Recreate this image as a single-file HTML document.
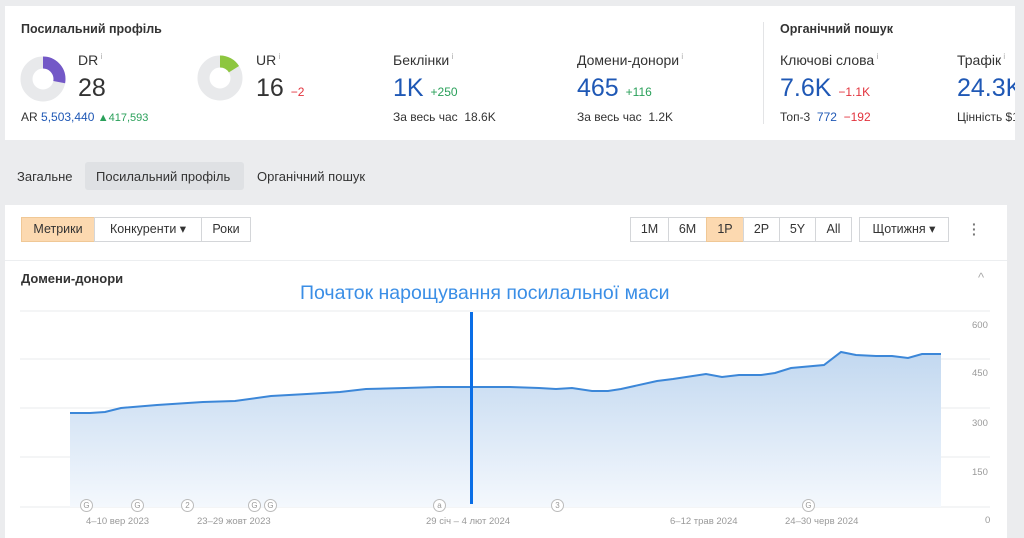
<!DOCTYPE html>
<html><head><meta charset="utf-8"><style>
*{margin:0;padding:0;box-sizing:border-box}
body{width:1024px;height:538px;overflow:hidden;background:#ebecee;font-family:"Liberation Sans",sans-serif;color:#333;position:relative}
.a{position:absolute;white-space:nowrap}
.top{position:absolute;left:5px;top:6px;width:1019px;height:134px;background:#fff}
.h{font-size:12.5px;font-weight:bold;color:#333}
.lbl{font-size:14px;color:#333}
.lbl sup{font-size:8px;color:#aaa;vertical-align:6px}
.big{font-size:25px}
.blue{color:#1f58b5}
.sm{font-size:12px;color:#333}
.g{color:#2aa05a}.r{color:#e2333d}
.btn{position:absolute;top:217px;height:25px;border:1px solid #d4d6d9;background:#fff;font-size:12.5px;line-height:23px;text-align:center;color:#333}
.pe{background:#fcd9b0;border-color:#f0c896}
.mk{position:absolute;top:499px;width:13px;height:13px;border:1px solid #bbb;border-radius:50%;background:#fff;font-size:8px;line-height:11px;text-align:center;color:#999}
.dt{position:absolute;top:516px;font-size:9.5px;color:#999;white-space:nowrap}
.yl{position:absolute;left:972px;font-size:9.5px;color:#999}
</style></head><body>
<div class="top"></div>
<div class="a h" style="left:21px;top:22px">Посилальний профіль</div>
<svg class="a" style="left:20px;top:55px" width="48" height="48" viewBox="0 0 48 48">
<circle cx="23" cy="24" r="16.5" fill="none" stroke="#e8e9eb" stroke-width="12"/>
<circle cx="23" cy="24" r="16.5" fill="none" stroke="#7358c7" stroke-width="12" stroke-dasharray="29 200" transform="rotate(-90 23 24)"/></svg>
<div class="a lbl" style="left:78px;top:52px">DR<sup> i</sup></div>
<div class="a big" style="left:78px;top:74px">28</div>
<div class="a sm" style="left:21px;top:110px">AR <span class="blue">5,503,440</span> <span class="g" style="font-size:11px">▲417,593</span></div>
<svg class="a" style="left:197px;top:55px" width="48" height="48" viewBox="0 0 48 48">
<circle cx="23" cy="23" r="16.5" fill="none" stroke="#e8e9eb" stroke-width="12"/>
<circle cx="23" cy="23" r="16.5" fill="none" stroke="#8dc63f" stroke-width="12" stroke-dasharray="16.6 200" transform="rotate(-90 23 23)"/></svg>
<div class="a lbl" style="left:256px;top:52px">UR<sup> i</sup></div>
<div class="a big" style="left:256px;top:74px">16 <span class="r" style="font-size:12px">−2</span></div>
<div class="a lbl" style="left:393px;top:52px">Беклінки<sup> i</sup></div>
<div class="a big blue" style="left:393px;top:74px">1K <span class="g" style="font-size:12px">+250</span></div>
<div class="a sm" style="left:393px;top:110px">За весь час&nbsp; 18.6K</div>
<div class="a lbl" style="left:577px;top:52px">Домени-донори<sup> i</sup></div>
<div class="a big blue" style="left:577px;top:74px">465 <span class="g" style="font-size:12px">+116</span></div>
<div class="a sm" style="left:577px;top:110px">За весь час&nbsp; 1.2K</div>
<div class="a" style="left:763px;top:22px;width:1px;height:102px;background:#e3e4e6"></div>
<div class="a h" style="left:780px;top:22px">Органічний пошук</div>
<div class="a lbl" style="left:780px;top:52px">Ключові слова<sup> i</sup></div>
<div class="a big blue" style="left:780px;top:74px">7.6K <span class="r" style="font-size:12px">−1.1K</span></div>
<div class="a sm" style="left:780px;top:110px">Топ-3&nbsp; <span class="blue">772</span>&nbsp; <span class="r">−192</span></div>
<div class="a lbl" style="left:957px;top:52px">Трафік<sup> i</sup></div>
<div class="a big blue" style="left:957px;top:74px">24.3K</div>
<div class="a sm" style="left:957px;top:110px">Цінність $1</div>
<div class="a" style="left:1015px;top:0;width:9px;height:140px;background:#ebecee"></div>

<div class="a sm" style="left:17px;top:169px;font-size:13px">Загальне</div>
<div class="a" style="left:85px;top:162px;width:159px;height:28px;background:#dfe1e4;border-radius:3px"></div>
<div class="a sm" style="left:96px;top:169px;font-size:13px">Посилальний профіль</div>
<div class="a sm" style="left:257px;top:169px;font-size:13px">Органічний пошук</div>

<div class="a" style="left:5px;top:205px;width:1002px;height:333px;background:#fff"></div>
<div class="btn pe" style="left:21px;width:74px">Метрики</div>
<div class="btn" style="left:94px;width:108px">Конкуренти ▾</div>
<div class="btn" style="left:201px;width:50px">Роки</div>
<div class="btn" style="left:630px;width:39px">1M</div>
<div class="btn" style="left:668px;width:39px">6M</div>
<div class="btn pe" style="left:706px;width:38px">1P</div>
<div class="btn" style="left:743px;width:37px">2P</div>
<div class="btn" style="left:779px;width:37px">5Y</div>
<div class="btn" style="left:815px;width:37px">All</div>
<div class="btn" style="left:859px;width:90px">Щотижня ▾</div>
<div class="a" style="left:972px;top:222px;color:#777;font-size:14px;font-weight:bold;line-height:5px">·<br>·<br>·</div>
<div class="a" style="left:5px;top:260px;width:1002px;height:1px;background:#eceef0"></div>
<div class="a h" style="left:21px;top:271px;font-size:13px">Домени-донори</div>
<div class="a" style="left:978px;top:270px;color:#aaa;font-size:13px">^</div>
<div class="a" style="left:300px;top:282px;font-size:19.5px;color:#3a8ee6">Початок нарощування посилальної маси</div>

<svg class="a" style="left:0;top:300px" width="1024" height="238">
<defs><linearGradient id="gr" x1="0" y1="0" x2="0" y2="1"><stop offset="0" stop-color="#c2d8f0"/><stop offset="1" stop-color="#f4f8fd"/></linearGradient></defs>
<g stroke="#f1f2f4" stroke-width="1.5"><line x1="20" y1="11" x2="990" y2="11"/><line x1="20" y1="59" x2="990" y2="59"/><line x1="20" y1="108" x2="990" y2="108"/><line x1="20" y1="157" x2="990" y2="157"/><line x1="20" y1="207" x2="990" y2="207"/></g>
<path d="M70,113 L90,113 105,112 121,108 157,105 203,102 235,101 271,96 307,94 340,92 366,89 405,88 438,87 471,87 510,87 539,88 556,89 572,88 592,91 608,91 621,89 657,81 673,79 706,74 722,77 739,75 761,75 775,73 791,68 824,65 841,52 856,55 876,56 892,56 908,58 922,54 941,54 L941,207 L70,207Z" fill="url(#gr)"/>
<path d="M70,113 L90,113 105,112 121,108 157,105 203,102 235,101 271,96 307,94 340,92 366,89 405,88 438,87 471,87 510,87 539,88 556,89 572,88 592,91 608,91 621,89 657,81 673,79 706,74 722,77 739,75 761,75 775,73 791,68 824,65 841,52 856,55 876,56 892,56 908,58 922,54 941,54" fill="none" stroke="#3c87d8" stroke-width="2"/>
<rect x="470" y="12" width="3" height="192" fill="#0a6ee6"/>
</svg>
<div class="yl" style="top:320px">600</div><div class="yl" style="top:368px">450</div><div class="yl" style="top:418px">300</div><div class="yl" style="top:467px">150</div><div class="yl" style="top:515px;left:985px">0</div>
<div class="mk" style="left:80px">G</div><div class="mk" style="left:131px">G</div><div class="mk" style="left:181px">2</div><div class="mk" style="left:248px">G</div><div class="mk" style="left:264px">G</div><div class="mk" style="left:433px">a</div><div class="mk" style="left:551px">3</div><div class="mk" style="left:802px">G</div>
<div class="dt" style="left:86px">4–10 вер 2023</div>
<div class="dt" style="left:197px">23–29 жовт 2023</div>
<div class="dt" style="left:426px">29 січ – 4 лют 2024</div>
<div class="dt" style="left:670px">6–12 трав 2024</div>
<div class="dt" style="left:785px">24–30 черв 2024</div>
</body></html>
